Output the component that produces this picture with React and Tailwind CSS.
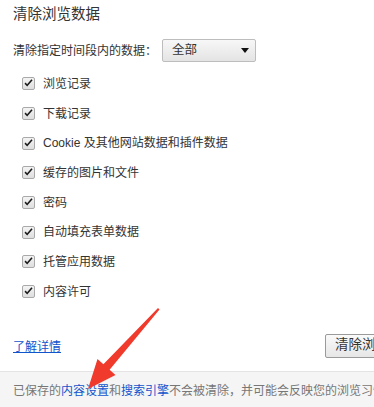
import React from "react";

const items = [
  "浏览记录",
  "下载记录",
  "Cookie 及其他网站数据和插件数据",
  "缓存的图片和文件",
  "密码",
  "自动填充表单数据",
  "托管应用数据",
  "内容许可",
];

function CheckBox() {
  return (
    <span className="w-[13px] h-[13px] shrink-0 border border-[#a9a9a9] rounded-[2px] bg-gradient-to-b from-[#f4f4f4] to-[#dedede] flex items-center justify-center">
      <svg width="11" height="11" viewBox="0 0 11 11">
        <path d="M1.5 5.8 L4.2 8.6 L9.6 2.2 L8.4 1.2 L4.1 6.3 L2.7 4.6 Z" fill="#1a1a1a" />
      </svg>
    </span>
  );
}

export default function App() {
  return (
    <div className="relative w-[374px] h-[407px] overflow-hidden bg-white text-[#333] font-['Liberation_Sans','Noto_Sans_CJK_SC',sans-serif]">
      <div className="px-[13px]">
        <h1 className="pt-[4px] text-[14.5px] leading-[20px] font-normal">清除浏览数据</h1>

        <div className="mt-[15px] flex items-center h-[23px] text-[12px]">
          <span>清除指定时间段内的数据：</span>
          <div className="ml-[5px] w-[94px] h-[23px] border border-[#bdbdbd] rounded-[2px] bg-gradient-to-b from-[#f7f7f7] to-[#e4e4e4] flex items-center justify-between pl-[9px] pr-[6px] text-[12.5px]">
            <span>全部</span>
            <svg width="8" height="5" viewBox="0 0 8 5">
              <path d="M0 0 H8 L4 5 Z" fill="#111" />
            </svg>
          </div>
        </div>

        <div className="mt-[7px] pl-[9px] text-[12px]">
          {items.map((t) => (
            <div key={t} className="h-[29.7px] flex items-center gap-[8px]">
              <CheckBox />
              <span>{t}</span>
            </div>
          ))}
        </div>

        <div className="mt-[27px] h-[24px] flex items-center">
          <div className="w-[312px] shrink-0 pt-[1px]">
            <a className="text-[12px] text-[#1155cc] underline">了解详情</a>
          </div>
          <button className="h-[24px] shrink-0 px-[9px] border border-[#9a9a9a] rounded-[2px] bg-gradient-to-b from-[#fafafa] to-[#e6e6e6] text-[13.5px] text-[#333] whitespace-nowrap">
            清除浏览数据
          </button>
        </div>
      </div>

      <div className="mt-[13px] h-[40px] border-t border-[#e4e4e4] bg-[#f5f5f5] px-[13px] pb-[1px] flex items-center text-[12px] text-[#777] whitespace-nowrap">
        <span>
          已保存的<span className="text-[#1155cc]">内容设置</span>和<span className="text-[#1155cc]">搜索引擎</span>不会被清除，并可能会反映您的浏览习惯。
        </span>
      </div>

      <svg className="absolute left-0 top-0 pointer-events-none" width="374" height="407" viewBox="0 0 374 407">
        <path
          d="M158 308 L159.5 309.5 L109.6 369.8 L115.5 375 L88 389 L97.5 359 L103.4 364.2 Z"
          fill="#ef3a2c"
        />
      </svg>
    </div>
  );
}
